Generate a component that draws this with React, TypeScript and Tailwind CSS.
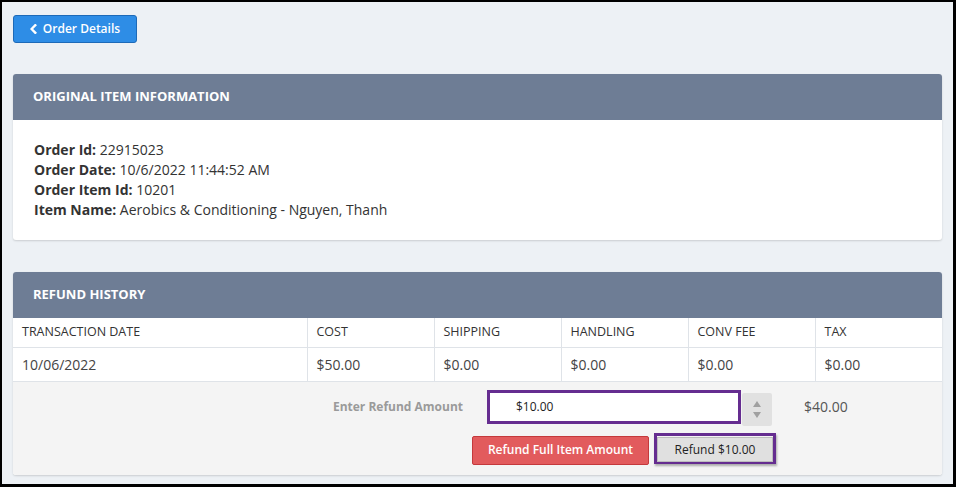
const columns = ['Transaction Date', 'Cost', 'Shipping', 'Handling', 'Conv Fee', 'Tax'];
const row = ['10/06/2022', '$50.00', '$0.00', '$0.00', '$0.00', '$0.00'];

const info = [
  { label: 'Order Id:', value: '22915023' },
  { label: 'Order Date:', value: '10/6/2022 11:44:52 AM' },
  { label: 'Order Item Id:', value: '10201' },
  { label: 'Item Name:', value: 'Aerobics & Conditioning - Nguyen, Thanh' },
];

const PanelHeader = ({ title }: { title: string }) => (
  <div className="h-[46px] bg-[#6e7d95] rounded-t-[3px] flex items-center pl-5">
    <h2 className="text-[13px] font-bold uppercase text-white">{title}</h2>
  </div>
);

const App = () => {
  return (
    <div
      className="w-[956px] h-[487px] bg-[#edf1f5] border-l-2 border-t-2 border-r-[3px] border-b-[3px] border-black px-[11px] pt-[13px] text-[#333]"
      style={{ fontFamily: '"Open Sans", "Liberation Sans", sans-serif' }}
    >
      <button className="h-[28px] w-[124px] rounded-[3px] bg-[#2e8de6] border border-[#1d6ab8] text-white text-[12px] font-semibold flex items-center justify-center gap-[6px]">
        <svg width="7" height="10" viewBox="0 0 7 10" fill="none">
          <path d="M5.3 1.2 L1.6 5 L5.3 8.8" stroke="white" strokeWidth="2.4" strokeLinecap="square" />
        </svg>
        Order Details
      </button>

      {/* Original Item */}
      <div className="mt-[31px] bg-white rounded-[3px] shadow-[0_1px_2px_rgba(0,0,0,0.15)]">
        <PanelHeader title="Original Item Information" />
        <div className="px-[21px] py-5 text-[14px] leading-[20px]">
          {info.map((i) => (
            <p key={i.label}>
              <span className="font-bold">{i.label}</span> {i.value}
            </p>
          ))}
        </div>
      </div>

      {/* Refund History */}
      <div className="mt-[32px] bg-white rounded-[3px] shadow-[0_1px_2px_rgba(0,0,0,0.15)]">
        <PanelHeader title="Refund History" />
        <table className="w-full border-collapse table-fixed">
          <colgroup>
            <col className="w-[294px]" />
            <col className="w-[127px]" />
            <col className="w-[127px]" />
            <col className="w-[127px]" />
            <col className="w-[127px]" />
            <col />
          </colgroup>
          <thead>
            <tr className="h-[29px] border-b border-[#dfe3e8]">
              {columns.map((c, idx) => (
                <th
                  key={c}
                  className={`text-left font-normal uppercase text-[12.5px] pl-[9px] text-[#333] ${idx > 0 ? 'border-l border-[#dfe3e8]' : ''}`}
                >
                  {c}
                </th>
              ))}
            </tr>
          </thead>
          <tbody>
            <tr className="h-[34px] border-b border-[#dfe3e8]">
              {row.map((v, idx) => (
                <td
                  key={idx}
                  className={`text-[14px] pl-[9px] text-[#444] ${idx > 0 ? 'border-l border-[#dfe3e8]' : ''}`}
                >
                  {v}
                </td>
              ))}
            </tr>
          </tbody>
        </table>

        <div className="bg-[#f4f4f4] h-[93px] pt-[8px] rounded-b-[3px]">
          <div className="flex items-start h-[38px]">
            <label className="w-[450px] h-[34px] flex items-center justify-end text-[12px] font-bold text-[#9a9a9a]">
              Enter Refund Amount
            </label>
            <div className="ml-[24px] w-[254px] h-[34px] border-[3px] border-[#652d90] bg-white flex items-center pl-[26px] text-[12px] text-[#222]">
              $10.00
            </div>
            <div className="ml-px mt-[3px] w-[30px] h-[33px] bg-[#e1e1e1] rounded-[2px] flex flex-col items-center justify-center gap-[5px]">
              <span className="w-0 h-0 border-l-[4px] border-r-[4px] border-b-[6px] border-l-transparent border-r-transparent border-b-[#a0a0a0]" />
              <span className="w-0 h-0 border-l-[4px] border-r-[4px] border-t-[6px] border-l-transparent border-r-transparent border-t-[#a0a0a0]" />
            </div>
            <span className="ml-[32px] h-[34px] flex items-center text-[14px] text-[#555]">$40.00</span>
          </div>
          <div className="flex items-start mt-[5px] pl-[459px]">
            <button className="mt-[3px] h-[29px] w-[177px] rounded-[2px] bg-[#e25b5d] border border-[#c4393c] text-white text-[12px] font-semibold">
              Refund Full Item Amount
            </button>
            <div className="ml-[5px] w-[122px] h-[31px] border-[3px] border-[#652d90] shadow-[1px_2px_2px_rgba(0,0,0,0.3)]">
              <button className="w-full h-full bg-[#e0e0e0] border border-[#bdbdbd] text-[12px] text-[#222]">
                Refund $10.00
              </button>
            </div>
          </div>
        </div>
      </div>
    </div>
  );
};

export default App;
